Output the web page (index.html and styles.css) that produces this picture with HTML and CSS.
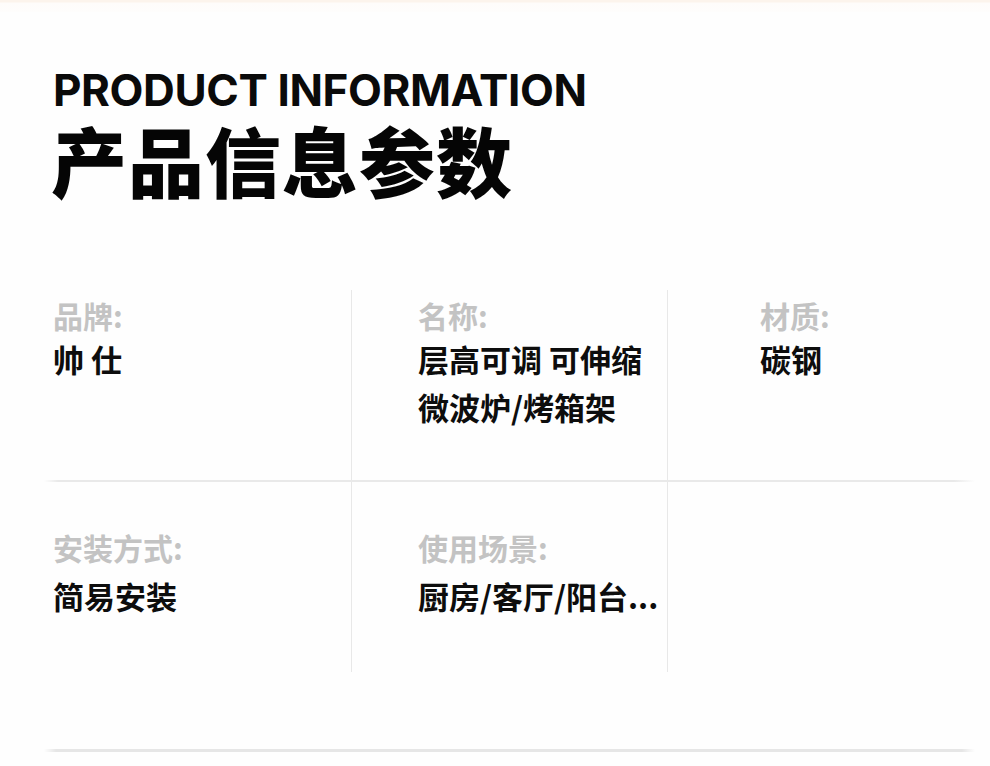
FILE: index.html
```html
<!DOCTYPE html>
<html lang="zh-CN">
<head>
<meta charset="utf-8">
<title>产品信息参数</title>
<link rel="stylesheet" href="styles.css">
</head>
<body>
<div class="page">
  <div class="top-band"></div>
  <header class="heading">
    <h2 class="heading-en">PRODUCT INFORMATION</h2>
    <h1 class="heading-cn">产品信息参数</h1>
  </header>

  <section class="specs">
    <div class="spec-row spec-row-first">
      <div class="cell cell-a">
        <div class="label">品牌:</div>
        <div class="value">帅 仕</div>
      </div>
      <div class="cell cell-b">
        <div class="label">名称:</div>
        <div class="value">层高可调 可伸缩<br>微波炉/烤箱架</div>
      </div>
      <div class="cell cell-c">
        <div class="label">材质:</div>
        <div class="value">碳钢</div>
      </div>
    </div>
    <div class="row-divider"></div>
    <div class="spec-row spec-row-second">
      <div class="cell cell-a">
        <div class="label">安装方式:</div>
        <div class="value">简易安装</div>
      </div>
      <div class="cell cell-b">
        <div class="label">使用场景:</div>
        <div class="value">厨房/客厅/阳台...</div>
      </div>
      <div class="cell cell-c"></div>
    </div>
  </section>

  <div class="bottom-line"></div>
</div>
</body>
</html>
```

FILE: styles.css
```css
html, body {
  margin: 0;
  padding: 0;
  background: #fefefe;
}

.page {
  width: 990px;
  height: 766px;
  overflow: hidden;
  font-family: "Noto Sans CJK SC", "Noto Sans", sans-serif;
}

.top-band {
  height: 12px;
  background: linear-gradient(to bottom, #fcf4ec 0px, #fcf4ec 2px, #fefcfa 3px, #fefdfc 12px);
}

.heading {
  padding: 58px 0 0 53px;
}

.heading-en {
  margin: 0;
  font-family: Inter, "Noto Sans", sans-serif;
  font-weight: 700;
  font-size: 44px;
  line-height: 40px;
  color: #0a0a0a;
  letter-spacing: -0.4px;
}

.heading-cn {
  margin: 9px 0 0 -2px;
  font-family: "Noto Sans CJK SC", sans-serif;
  font-weight: 900;
  font-size: 76px;
  line-height: 80px;
  color: #050505;
  letter-spacing: 1px;
}

.specs {
  margin: 91px 0 0 44px;
  width: 931px;
}

.spec-row {
  display: grid;
  grid-template-columns: 307px 316px 308px;
  height: 190px;
}

.cell {
  box-sizing: border-box;
}

.cell-b, .cell-c {
  border-left: 1px solid #e8e8e8;
}

.cell-a { padding-left: 9px; }
.cell-b { padding-left: 66px; }
.cell-c { padding-left: 92px; }

.spec-row-first .cell { padding-top: 7px; }
.spec-row-second .cell { padding-top: 47px; }

.label {
  font-size: 30px;
  line-height: 36px;
  font-weight: 700;
  color: #c3c3c3;
}

.value {
  margin-top: 2px;
  font-size: 31px;
  line-height: 48px;
  font-weight: 700;
  color: #0d0d0d;
}

.spec-row-second .value {
  margin-top: 7px;
}

.row-divider {
  height: 2px;
  background: linear-gradient(to right, rgba(232,232,232,0) 0px, #e9e9e9 14px, #e9e9e9 910px, rgba(232,232,232,0) 931px);
}

.bottom-line {
  margin: 77px 0 0 44px;
  width: 931px;
  height: 3px;
  background: linear-gradient(to right, rgba(230,230,230,0) 0px, #e6e6e6 12px, #e6e6e6 918px, rgba(230,230,230,0) 931px);
}
```
